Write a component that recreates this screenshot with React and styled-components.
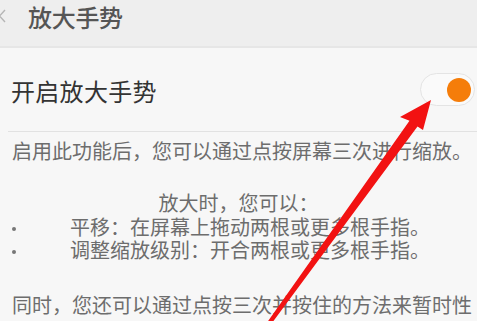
import React from 'react';
import styled, { createGlobalStyle } from 'styled-components';

const GlobalStyle = createGlobalStyle`
  html, body {
    margin: 0;
    padding: 0;
    background: #f7f7f7;
    overflow: hidden;
  }
  body {
    font-family: "Noto Sans CJK SC", "Noto Sans", sans-serif;
  }
`;

const Screen = styled.div`
  position: relative;
  width: 477px;
  height: 321px;
  overflow: hidden;
  background: #f7f7f7;
`;

const Header = styled.div`
  display: flex;
  align-items: flex-start;
  height: 46px;
  background: #eeeeee;
  border-bottom: 2px solid #e6e6e6;
`;

const Back = styled.svg`
  width: 8px;
  height: 14px;
  margin: 9px 0 0 -2px;
`;

const Title = styled.div`
  margin-left: 22px;
  font-size: 24px;
  font-weight: 500;
  line-height: 34px;
  color: #555;
  letter-spacing: -0.3px;
`;

const SwitchRow = styled.div`
  display: flex;
  align-items: center;
  justify-content: space-between;
  height: 83px;
  margin-left: 8px;
  padding: 0 2px 0 3px;
  border-bottom: 1px solid #e2e2e2;
`;

const RowLabel = styled.div`
  font-size: 24px;
  color: #333;
  letter-spacing: 0.3px;
  margin-top: 2px;
`;

const Toggle = styled.div`
  position: relative;
  width: 53px;
  height: 31px;
  border: 1px solid #e4e4e4;
  border-radius: 17px;
  background: #fafafa;
`;

const Knob = styled.div`
  position: absolute;
  top: 4px;
  right: 3px;
  width: 24px;
  height: 24px;
  border-radius: 50%;
  background: #f57d0a;
`;

const Body = styled.div`
  padding: 7px 0 0 12px;
  color: #6d6d6d;
  font-size: 20px;
`;

const Para = styled.p`
  margin: ${p => p.$top || 0}px 0 0;
  line-height: 24px;
  white-space: nowrap;
  text-align: ${p => (p.$center ? 'center' : 'left')};
  padding-right: ${p => (p.$center ? '12px' : '0')};
`;

const BulletList = styled.ul`
  list-style: none;
  margin: 0;
  padding: 0;
`;

const Bullet = styled.li`
  display: flex;
  align-items: center;
  height: 23px;
  line-height: 23px;
  white-space: nowrap;

  &::before {
    content: "";
    width: 4px;
    height: 4px;
    border-radius: 50%;
    background: #777;
    margin-right: 54px;
    margin-top: 4px;
  }
`;

const Arrow = styled.svg`
  position: absolute;
  left: 0;
  top: 0;
  width: 477px;
  height: 321px;
  pointer-events: none;
`;

export default function App() {
  return (
    <Screen>
      <GlobalStyle />
      <Header>
        <Back viewBox="0 0 8 14">
          <path d="M7 1 L1.5 7 L7 13" fill="none" stroke="#b5b5b5" strokeWidth="1.4" />
        </Back>
        <Title>放大手势</Title>
      </Header>
      <SwitchRow>
        <RowLabel>开启放大手势</RowLabel>
        <Toggle>
          <Knob />
        </Toggle>
      </SwitchRow>
      <Body>
        <Para>启用此功能后，您可以通过点按屏幕三次进行缩放。</Para>
        <Para $center $top={28}>放大时，您可以：</Para>
        <BulletList>
          <Bullet>平移：在屏幕上拖动两根或更多根手指。</Bullet>
          <Bullet>调整缩放级别：开合两根或更多根手指。</Bullet>
        </BulletList>
        <Para $top={32}>同时，您还可以通过点按三次并按住的方法来暂时性</Para>
      </Body>
      <Arrow viewBox="0 0 477 321">
        <polygon
          fill="#f21212"
          points="266,324 270.5,325 417.5,126.5 423,130 431,100 400,117 409.5,120.7"
        />
      </Arrow>
    </Screen>
  );
}
